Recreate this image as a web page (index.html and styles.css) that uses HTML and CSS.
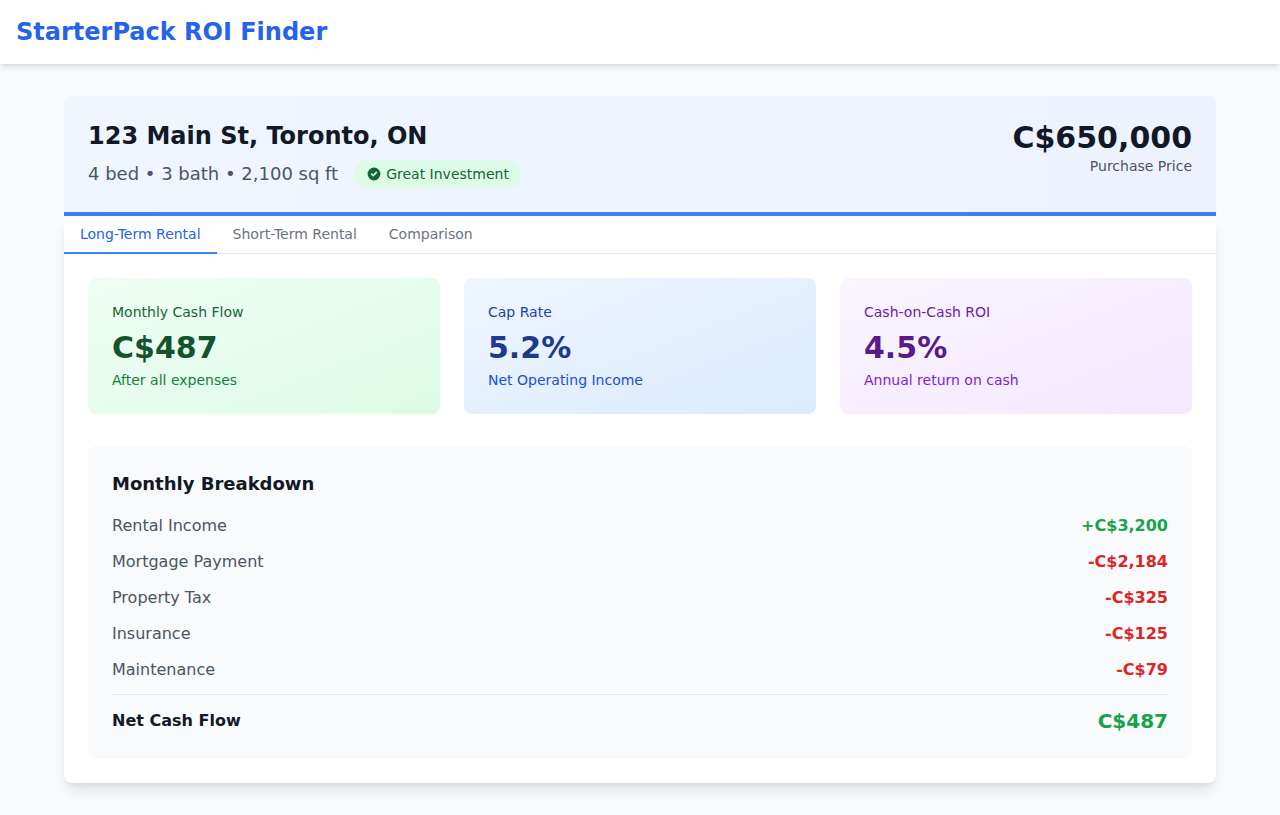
FILE: index.html
```html
<!DOCTYPE html>
<html lang="en">
<head>
<meta charset="utf-8">
<title>StarterPack ROI Finder</title>
<link rel="stylesheet" href="styles.css">
</head>
<body>
<header class="topbar"><h1 class="brand">StarterPack ROI Finder</h1></header>
<main class="page">
  <section class="property">
    <div>
      <h2 class="address">123 Main St, Toronto, ON</h2>
      <div class="facts">
        <span>4 bed • 3 bath • 2,100 sq ft</span>
        <span class="badge">
          <svg class="badge-icon" viewBox="0 0 20 20" fill="currentColor" aria-hidden="true"><path fill-rule="evenodd" d="M10 18a8 8 0 100-16 8 8 0 000 16zm3.707-9.293a1 1 0 00-1.414-1.414L9 10.586 7.707 9.293a1 1 0 00-1.414 1.414l2 2a1 1 0 001.414 0l4-4z" clip-rule="evenodd"/></svg>
          Great Investment
        </span>
      </div>
    </div>
    <div class="price">
      <div class="price-value">C$650,000</div>
      <div class="price-label">Purchase Price</div>
    </div>
  </section>
  <section class="panel">
    <nav class="tabs">
      <button class="tab tab-active">Long-Term Rental</button>
      <button class="tab">Short-Term Rental</button>
      <button class="tab">Comparison</button>
    </nav>
    <div class="panel-body">
      <div class="metrics">
        <div class="metric metric-green">
          <div class="metric-label">Monthly Cash Flow</div>
          <div class="metric-value">C$487</div>
          <div class="metric-note">After all expenses</div>
        </div>
        <div class="metric metric-blue">
          <div class="metric-label">Cap Rate</div>
          <div class="metric-value">5.2%</div>
          <div class="metric-note">Net Operating Income</div>
        </div>
        <div class="metric metric-purple">
          <div class="metric-label">Cash-on-Cash ROI</div>
          <div class="metric-value">4.5%</div>
          <div class="metric-note">Annual return on cash</div>
        </div>
      </div>
      <div class="breakdown">
        <h3 class="breakdown-title">Monthly Breakdown</h3>
        <div class="rows">
          <div class="row"><span>Rental Income</span><span class="amount income">+C$3,200</span></div>
          <div class="row"><span>Mortgage Payment</span><span class="amount expense">-C$2,184</span></div>
          <div class="row"><span>Property Tax</span><span class="amount expense">-C$325</span></div>
          <div class="row"><span>Insurance</span><span class="amount expense">-C$125</span></div>
          <div class="row"><span>Maintenance</span><span class="amount expense">-C$79</span></div>
          <div class="row total"><span>Net Cash Flow</span><span class="total-value income">C$487</span></div>
        </div>
      </div>
    </div>
  </section>
</main>
</body>
</html>
```
FILE: styles.css
```css
* { box-sizing: border-box; margin: 0; padding: 0; }
body {
  font-family: "DejaVu Sans", sans-serif;
  font-size: 16px;
  line-height: 24px;
  color: #111827;
  background: #f9fafb;
}
.topbar {
  height: 64px;
  padding: 0 16px;
  display: flex;
  align-items: center;
  background: #fff;
  box-shadow: 0 4px 6px -1px rgba(0,0,0,.1), 0 2px 4px -2px rgba(0,0,0,.1);
}
.brand { font-size: 24px; line-height: 32px; font-weight: 700; color: #2563eb; }
.page { padding: 32px 64px; }
.property {
  display: flex;
  justify-content: space-between;
  align-items: flex-start;
  height: 120px;
  padding: 24px;
  border-bottom: 4px solid #3b82f6;
  border-radius: 8px 8px 0 0;
  background: linear-gradient(to right, #eff6ff, #eef2ff);
}
.address { font-size: 24px; line-height: 32px; font-weight: 700; }
.facts {
  display: flex;
  align-items: center;
  gap: 16px;
  margin-top: 8px;
  font-size: 18px;
  line-height: 28px;
  color: #4b5563;
}
.badge {
  display: inline-flex;
  align-items: center;
  gap: 4px;
  padding: 4px 12px;
  border-radius: 999px;
  font-size: 14px;
  line-height: 20px;
  font-weight: 500;
  color: #166534;
  background: #dcfce7;
}
.badge-icon { width: 16px; height: 16px; }
.price { text-align: right; }
.price-value { font-size: 30px; line-height: 36px; font-weight: 700; }
.price-label { font-size: 14px; line-height: 20px; color: #4b5563; }
.panel {
  background: #fff;
  border-radius: 0 0 8px 8px;
  box-shadow: 0 10px 15px -3px rgba(0,0,0,.1), 0 4px 6px -4px rgba(0,0,0,.1);
}
.tabs { display: flex; height: 38px; border-bottom: 1px solid #e5e7eb; }
.tab {
  height: 38px;
  padding: 8px 16px;
  border: 0;
  border-bottom: 2px solid transparent;
  background: none;
  font: 500 14px/20px "DejaVu Sans", sans-serif;
  color: #6b7280;
}
.tab-active { color: #2563eb; border-color: #3b82f6; }
.panel-body { padding: 24px; }
.metrics { display: grid; grid-template-columns: repeat(3, 1fr); gap: 24px; margin-bottom: 32px; }
.metric { padding: 24px; border-radius: 8px; font-size: 14px; line-height: 20px; }
.metric-value { margin: 8px 0 4px; font-size: 30px; line-height: 36px; font-weight: 700; }
.metric-green { background: linear-gradient(to bottom right, #f0fdf4, #dcfce7); color: #166534; }
.metric-green .metric-value { color: #14532d; }
.metric-green .metric-note { color: #15803d; }
.metric-blue { background: linear-gradient(to bottom right, #eff6ff, #dbeafe); color: #1e40af; }
.metric-blue .metric-value { color: #1e3a8a; }
.metric-blue .metric-note { color: #1d4ed8; }
.metric-purple { background: linear-gradient(to bottom right, #faf5ff, #f3e8ff); color: #6b21a8; }
.metric-purple .metric-value { color: #581c87; }
.metric-purple .metric-note { color: #7e22ce; }
.breakdown { padding: 24px; border-radius: 8px; background: #f9fafb; }
.breakdown-title { margin-bottom: 16px; font-size: 18px; line-height: 28px; font-weight: 600; }
.rows { display: grid; gap: 12px; }
.row { display: flex; justify-content: space-between; align-items: center; color: #4b5563; }
.amount { font-weight: 600; }
.income { color: #16a34a; }
.expense { color: #dc2626; }
.total { padding-top: 12px; border-top: 1px solid #e5e7eb; font-weight: 600; color: #111827; }
.total-value { font-size: 20px; line-height: 28px; font-weight: 700; }
```
